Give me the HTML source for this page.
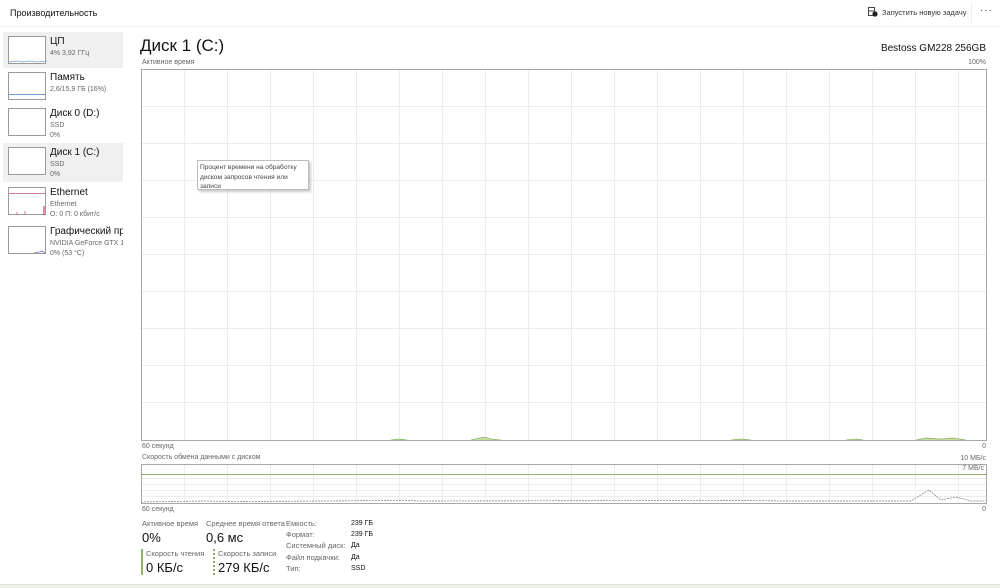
<!DOCTYPE html>
<html><head><meta charset="utf-8"><style>
*{margin:0;padding:0;box-sizing:border-box}
body{width:1000px;height:588px;overflow:hidden;background:#fff;font-family:"Liberation Sans","Noto Sans CJK SC",sans-serif;color:#222;position:relative}
.a{position:absolute;white-space:nowrap}
.item{position:absolute;left:3px;width:120px;height:36px;overflow:hidden}
.item.sel{background:#f0f0f0}
.th{position:absolute;left:5px;top:4px;width:38px;height:28px;border:1px solid #9a9a9a;background:#fff}
.t1{position:absolute;left:47px;top:4px;font-size:10px;color:#111;white-space:nowrap}
.t2{position:absolute;left:47px;top:17px;font-size:7px;color:#666;line-height:9.5px;white-space:nowrap}
.lab{font-size:7px;color:#666}
.big{font-size:13px;color:#111}
</style></head><body>
<div class="a" style="left:10px;top:8px;font-size:9px;color:#111">Производительность</div>
<div class="a" style="left:0;top:26px;width:1000px;height:1px;background:#f0f0f0"></div>
<svg class="a" style="left:868px;top:7px" width="10" height="10"><rect x="0.5" y="0.5" width="6" height="8" fill="none" stroke="#444"/><line x1="0.5" y1="4" x2="6.5" y2="4" stroke="#444"/><circle cx="7" cy="7" r="2.6" fill="#222"/></svg>
<div class="a" style="left:882px;top:8px;font-size:7.5px;color:#333">Запустить новую задачу</div>
<div class="a" style="left:971px;top:3px;width:1px;height:20px;background:#eee"></div>
<div class="a" style="left:980px;top:5px;font-size:10px;color:#444;letter-spacing:1px">···</div>

<div class="item sel" style="top:32px"><div class="th"><svg width="38" height="28"><polyline points="0,25 8,24 14,25 20,24 28,25 38,24" fill="none" stroke="#7aa3c8" stroke-width="0.8"/></svg></div><div class="t1">ЦП</div><div class="t2">4% 3,92 ГГц</div></div>
<div class="item" style="top:68px"><div class="th"><div style="position:absolute;left:0;right:0;top:21px;height:1px;background:#6a9bd0"></div></div><div class="t1">Память</div><div class="t2">2,6/15,9 ГБ (16%)</div></div>
<div class="item" style="top:104px"><div class="th"></div><div class="t1">Диск 0 (D:)</div><div class="t2">SSD<br>0%</div></div>
<div class="item sel" style="top:143px;height:39px"><div class="th"></div><div class="t1">Диск 1 (C:)</div><div class="t2">SSD<br>0%</div></div>
<div class="item" style="top:183px"><div class="th"><div style="position:absolute;left:0;right:0;top:5px;height:1px;background:#c97a95"></div><svg width="38" height="28" style="position:absolute;left:0;top:0"><line x1="8" y1="27" x2="8" y2="24" stroke="#c97a95"/><line x1="16" y1="27" x2="16" y2="23" stroke="#c97a95"/><line x1="35" y1="27" x2="35" y2="18" stroke="#c23"/></svg></div><div class="t1">Ethernet</div><div class="t2">Ethernet<br>О: 0 П: 0 кбит/с</div></div>
<div class="item" style="top:222px"><div class="th"><svg width="38" height="28"><polyline points="25,26 30,25 33,24 36,26" fill="none" stroke="#7a70c0" stroke-width="0.8"/></svg></div><div class="t1">Графический про</div><div class="t2">NVIDIA GeForce GTX 10<br>0% (53 °C)</div></div>

<div class="a" style="left:140px;top:36px;font-size:17px;color:#111">Диск 1 (C:)</div>
<div class="a" style="right:14px;top:43px;font-size:10px;color:#111">Bestoss GM228 256GB</div>
<div class="a lab" style="left:142px;top:59px">Активное время</div>
<div class="a lab" style="right:14px;top:59px">100%</div>

<svg class="a" style="left:141px;top:69px" width="846" height="373">
<g stroke="#ececec" stroke-width="1">
<line x1="43.5" y1="0" x2="43.5" y2="372"/><line x1="86.5" y1="0" x2="86.5" y2="372"/><line x1="129.5" y1="0" x2="129.5" y2="372"/><line x1="172.5" y1="0" x2="172.5" y2="372"/><line x1="215.5" y1="0" x2="215.5" y2="372"/><line x1="258.5" y1="0" x2="258.5" y2="372"/><line x1="301.5" y1="0" x2="301.5" y2="372"/><line x1="344.5" y1="0" x2="344.5" y2="372"/><line x1="387.5" y1="0" x2="387.5" y2="372"/><line x1="430.5" y1="0" x2="430.5" y2="372"/><line x1="473.5" y1="0" x2="473.5" y2="372"/><line x1="516.5" y1="0" x2="516.5" y2="372"/><line x1="559.5" y1="0" x2="559.5" y2="372"/><line x1="602.5" y1="0" x2="602.5" y2="372"/><line x1="645.5" y1="0" x2="645.5" y2="372"/><line x1="688.5" y1="0" x2="688.5" y2="372"/><line x1="731.5" y1="0" x2="731.5" y2="372"/><line x1="774.5" y1="0" x2="774.5" y2="372"/><line x1="817.5" y1="0" x2="817.5" y2="372"/>
<line x1="0" y1="37.5" x2="846" y2="37.5"/><line x1="0" y1="74.5" x2="846" y2="74.5"/><line x1="0" y1="111.5" x2="846" y2="111.5"/><line x1="0" y1="148.5" x2="846" y2="148.5"/><line x1="0" y1="185.5" x2="846" y2="185.5"/><line x1="0" y1="222.5" x2="846" y2="222.5"/><line x1="0" y1="259.5" x2="846" y2="259.5"/><line x1="0" y1="296.5" x2="846" y2="296.5"/><line x1="0" y1="333.5" x2="846" y2="333.5"/>
</g>
<path d="M250,371 L258,370 L266,371 M330,371 L343,368 L350,370 L360,371 M590,371 L600,370 L610,371 M705,371 L715,370 L722,371 M775,371 L785,369 L800,370 L812,369 L825,371" fill="#c7dca0" stroke="#8fb36a" stroke-width="0.8"/>
<rect x="0.5" y="0.5" width="845" height="371" fill="none" stroke="#a8a8a8"/>
</svg>
<div class="a lab" style="left:142px;top:443px">60 секунд</div>
<div class="a lab" style="right:14px;top:443px">0</div>

<div class="a lab" style="left:142px;top:454px">Скорость обмена данными с диском</div>
<div class="a lab" style="right:14px;top:455px">10 МБ/с</div>
<svg class="a" style="left:141px;top:464px" width="846" height="40">
<g stroke="#ececec"><line x1="43.5" y1="0" x2="43.5" y2="40"/><line x1="86.5" y1="0" x2="86.5" y2="40"/><line x1="129.5" y1="0" x2="129.5" y2="40"/><line x1="172.5" y1="0" x2="172.5" y2="40"/><line x1="215.5" y1="0" x2="215.5" y2="40"/><line x1="258.5" y1="0" x2="258.5" y2="40"/><line x1="301.5" y1="0" x2="301.5" y2="40"/><line x1="344.5" y1="0" x2="344.5" y2="40"/><line x1="387.5" y1="0" x2="387.5" y2="40"/><line x1="430.5" y1="0" x2="430.5" y2="40"/><line x1="473.5" y1="0" x2="473.5" y2="40"/><line x1="516.5" y1="0" x2="516.5" y2="40"/><line x1="559.5" y1="0" x2="559.5" y2="40"/><line x1="602.5" y1="0" x2="602.5" y2="40"/><line x1="645.5" y1="0" x2="645.5" y2="40"/><line x1="688.5" y1="0" x2="688.5" y2="40"/><line x1="731.5" y1="0" x2="731.5" y2="40"/><line x1="774.5" y1="0" x2="774.5" y2="40"/><line x1="817.5" y1="0" x2="817.5" y2="40"/>
<line x1="0" y1="14.5" x2="846" y2="14.5"/><line x1="0" y1="20.5" x2="846" y2="20.5"/><line x1="0" y1="26.5" x2="846" y2="26.5"/><line x1="0" y1="32.5" x2="846" y2="32.5"/></g>
<line x1="0" y1="10.5" x2="846" y2="10.5" stroke="#8fb36a" stroke-width="1"/>
<polyline points="0,38 60,37 100,37.5 260,36.5 280,37 600,36.5 640,37 770,37 788,26 800,36 815,33 830,37 846,37" fill="none" stroke="#777" stroke-width="0.7" stroke-dasharray="2,1"/>
<rect x="0.5" y="0.5" width="845" height="39" fill="none" stroke="#a8a8a8"/>
</svg>
<div class="a lab" style="right:16px;top:465px">7 МБ/с</div>
<div class="a lab" style="left:142px;top:506px">60 секунд</div>
<div class="a lab" style="right:14px;top:506px">0</div>

<div class="a lab" style="left:142px;top:519px;font-size:7.5px">Активное время</div>
<div class="a big" style="left:142px;top:530px">0%</div>
<div class="a lab" style="left:206px;top:519px;font-size:7.5px">Среднее время ответа</div>
<div class="a big" style="left:206px;top:530px">0,6 мс</div>
<div class="a" style="left:141px;top:549px;width:2px;height:26px;background:#8fb36a"></div>
<div class="a lab" style="left:146px;top:549px;font-size:7.5px">Скорость чтения</div>
<div class="a big" style="left:146px;top:560px">0 КБ/с</div>
<div class="a" style="left:213px;top:549px;width:0;height:26px;border-left:2px dotted #8fb36a"></div>
<div class="a lab" style="left:218px;top:549px;font-size:7.5px">Скорость записи</div>
<div class="a big" style="left:218px;top:560px">279 КБ/с</div>
<div class="a lab" style="left:286px;top:518px;line-height:11.2px;font-size:7.5px">Емкость:<br>Формат:<br>Системный диск:<br>Файл подкачки:<br>Тип:</div>
<div class="a" style="left:351px;top:518px;line-height:11.2px;font-size:7px;color:#111">239 ГБ<br>239 ГБ<br>Да<br>Да<br>SSD</div>

<div class="a" style="left:197px;top:160px;width:112px;height:30px;background:#fff;border:1px solid #bbb;box-shadow:2px 2px 2px rgba(0,0,0,0.2);font-size:6.6px;color:#444;padding:2px 2px;line-height:9.5px">Процент времени на обработку<br>диском запросов чтения или<br>записи</div>

<div class="a" style="left:0;top:584px;width:1000px;height:4px;background:#eef2e8;border-top:1px solid #dfe6d6"></div>
</body></html>
